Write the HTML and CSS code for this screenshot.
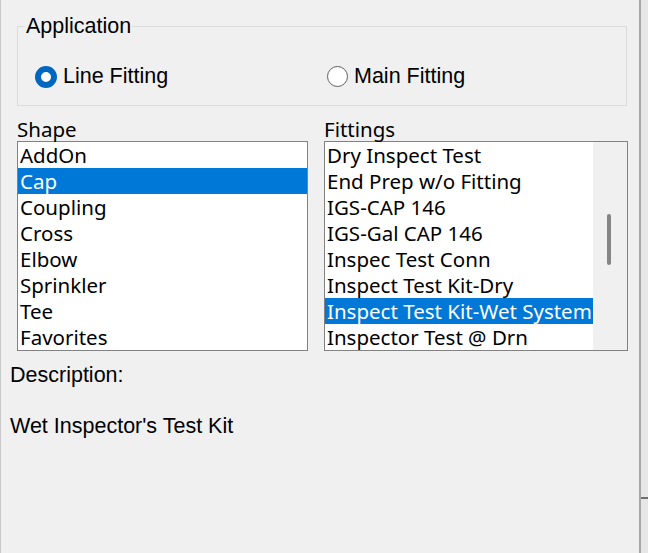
FILE: index.html
```html
<!DOCTYPE html>
<html lang="en">
<head>
    <meta charset="UTF-8">
    <title>Fitting</title>
    <link rel="stylesheet" href="styles.css">
</head>
<body>

<div class="dialog">
    <div class="content">
        <fieldset class="group">
            <legend>Application</legend>
            <div class="radios">
                <label class="radio"><span class="dot checked"></span>Line Fitting</label>
                <label class="radio"><span class="dot"></span>Main Fitting</label>
            </div>
        </fieldset>

        <div class="lists">
            <div class="col col-shape">
                <div class="caption">Shape</div>
                <ul class="listbox">
                    <li>AddOn</li>
                    <li class="sel">Cap</li>
                    <li>Coupling</li>
                    <li>Cross</li>
                    <li>Elbow</li>
                    <li>Sprinkler</li>
                    <li>Tee</li>
                    <li>Favorites</li>
                </ul>
            </div>
            <div class="col col-fit">
                <div class="caption">Fittings</div>
                <div class="listbox scrolled">
                    <ul class="items">
                        <li>Dry Inspect Test</li>
                        <li>End Prep w/o Fitting</li>
                        <li>IGS-CAP 146</li>
                        <li>IGS-Gal CAP 146</li>
                        <li>Inspec Test Conn</li>
                        <li>Inspect Test Kit-Dry</li>
                        <li class="sel">Inspect Test Kit-Wet System</li>
                        <li>Inspector Test @ Drn</li>
                    </ul>
                    <div class="scrollbar"><div class="thumb"></div></div>
                </div>
            </div>
        </div>

        <div class="desc-label">Description:</div>
        <div class="desc-text">Wet Inspector's Test Kit</div>
    </div>
    <div class="edge"><div class="edge-mark"></div></div>
</div>

</body>
</html>
```

FILE: styles.css
```css
body {
    margin: 0;
    padding: 0;
    background-color: #f0f0f0;
    font-family: "Liberation Sans", Arial, sans-serif;
    color: #000;
}
.dialog {
    display: flex;
    width: 648px;
    height: 553px;
    overflow: hidden;
}
.content {
    width: 639px;
    border-left: 1px solid #c8c8c8;
    box-sizing: border-box;
    padding: 14px 0 0 16px;
}
.edge {
    width: 9px;
    border-left: 2px solid #a8a8a8;
    background-color: #e6e6e6;
    box-sizing: border-box;
    padding-top: 497px;
}
.edge-mark {
    height: 2px;
    background-color: #6e6e6e;
}
.group {
    margin: 0;
    width: 610px;
    height: 92px;
    box-sizing: border-box;
    border: 1px solid #dcdcdc;
    padding: 0 0 0 17px;
}
.group legend {
    font-size: 21.5px;
    padding: 0 1px;
    margin-left: -10px;
}
.radios {
    display: flex;
    padding-top: 25px;
}
.radio {
    display: flex;
    align-items: center;
    gap: 6px;
    font-size: 21.5px;
    width: 292px;
}
.dot {
    width: 19px;
    height: 19px;
    border: 1.5px solid #5f5f5f;
    border-radius: 50%;
    background-color: #fff;
}
.dot.checked {
    width: 10px;
    height: 10px;
    border: 6px solid #0067c0;
}
.lists {
    display: flex;
    gap: 16px;
    margin-top: 11px;
}
.caption {
    font-family: "Noto Sans", sans-serif;
    font-size: 20.5px;
    line-height: 24px;
}
.listbox {
    margin: 0;
    padding: 0;
    list-style: none;
    background-color: #fff;
    border: 1px solid #828282;
    height: 210px;
    box-sizing: border-box;
    overflow: hidden;
    font-family: "Noto Sans", sans-serif;
    font-size: 20.5px;
}
.col-shape .listbox {
    width: 291px;
}
.col-fit .listbox {
    width: 304px;
}
.listbox li {
    height: 26px;
    line-height: 26px;
    padding-left: 2px;
    white-space: nowrap;
    overflow: hidden;
}
.listbox li.sel {
    background-color: #0078d7;
    color: #fff;
}
.scrolled {
    display: flex;
}
.items {
    margin: 0;
    padding: 0;
    list-style: none;
    width: 268px;
}
.scrollbar {
    flex: 1;
    background-color: #f0f0f0;
    padding: 72px 0 0 14px;
}
.thumb {
    width: 4px;
    height: 51px;
    border-radius: 2px;
    background-color: #858585;
}
.desc-label {
    font-size: 21.5px;
    margin: 12px 0 0 -7px;
}
.desc-text {
    font-size: 21.5px;
    margin: 26px 0 0 -7px;
}
```
